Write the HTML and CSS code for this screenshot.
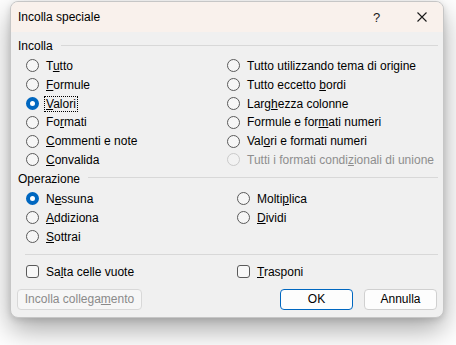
FILE: index.html
```html
<!DOCTYPE html>
<html lang="it">
<head>
<meta charset="utf-8">
<title>Incolla speciale</title>
<link rel="stylesheet" href="styles.css">
</head>
<body>
<div class="dialog">
  <div class="titlebar">
    <div class="title">Incolla speciale</div>
    <div class="tb-btn help">?</div>
    <div class="tb-btn close">
      <svg width="10" height="10" viewBox="0 0 10 10"><path d="M0.5 0.5L9.5 9.5M9.5 0.5L0.5 9.5" stroke="#1a1a1a" stroke-width="1.1" fill="none"/></svg>
    </div>
  </div>
  <div class="content">
    <div class="group-head"><span>Incolla</span><div class="rule"></div></div>
    <div class="radios paste">
      <div class="opt"><span class="radio"></span><span class="lbl">T<u>u</u>tto</span></div>
      <div class="opt"><span class="radio"></span><span class="lbl"><u>F</u>ormule</span></div>
      <div class="opt"><span class="radio on"></span><span class="lbl focus"><u>V</u>alori</span></div>
      <div class="opt"><span class="radio"></span><span class="lbl">Fo<u>r</u>mati</span></div>
      <div class="opt"><span class="radio"></span><span class="lbl"><u>C</u>ommenti e note</span></div>
      <div class="opt"><span class="radio"></span><span class="lbl"><u>C</u>onvalida</span></div>
      <div class="opt"><span class="radio"></span><span class="lbl">Tutto utilizzando tema di ori<u>g</u>ine</span></div>
      <div class="opt"><span class="radio"></span><span class="lbl">Tutto eccetto <u>b</u>ordi</span></div>
      <div class="opt"><span class="radio"></span><span class="lbl">Larg<u>h</u>ezza colonne</span></div>
      <div class="opt"><span class="radio"></span><span class="lbl">Formule e for<u>m</u>ati numeri</span></div>
      <div class="opt"><span class="radio"></span><span class="lbl">Val<u>o</u>ri e formati numeri</span></div>
      <div class="opt disabled"><span class="radio"></span><span class="lbl">Tutti i formati condi<u>z</u>ionali di unione</span></div>
    </div>
    <div class="group-head op-head"><span>Operazione</span><div class="rule"></div></div>
    <div class="radios ops">
      <div class="opt"><span class="radio on"></span><span class="lbl">N<u>e</u>ssuna</span></div>
      <div class="opt"><span class="radio"></span><span class="lbl"><u>A</u>ddiziona</span></div>
      <div class="opt"><span class="radio"></span><span class="lbl"><u>S</u>ottrai</span></div>
      <div class="opt"><span class="radio"></span><span class="lbl">Molti<u>p</u>lica</span></div>
      <div class="opt"><span class="radio"></span><span class="lbl"><u>D</u>ividi</span></div>
    </div>
    <div class="separator"></div>
    <div class="checks">
      <div class="opt"><span class="check"></span><span class="lbl">Sa<u>l</u>ta celle vuote</span></div>
      <div class="opt"><span class="check"></span><span class="lbl"><u>T</u>rasponi</span></div>
    </div>
    <div class="buttons">
      <button class="btn link" disabled>Incolla collega<u>m</u>ento</button>
      <div class="spacer"></div>
      <button class="btn ok">OK</button>
      <button class="btn cancel">Annulla</button>
    </div>
  </div>
</div>
</body>
</html>
```
FILE: styles.css
```css
* { box-sizing: border-box; }
html, body { margin: 0; padding: 0; background: #ffffff; }
html { min-height: 100%; }
body {
  min-height: 345px;
  font-family: "Liberation Sans", Arial, sans-serif;
  font-size: 12px;
  color: #000;
  padding-top: 1px;
}
.dialog {
  margin: 0 0 0 10px;
  width: 434px;
  height: 317px;
  border: 1px solid #c6c6c6;
  border-radius: 8px;
  background: #f0f0f0;
  box-shadow: 0 12px 28px rgba(0,0,0,0.34), 0 2px 6px rgba(0,0,0,0.12);
  overflow: hidden;
  display: flex;
  flex-direction: column;
}
.titlebar {
  display: flex;
  align-items: center;
  height: 30px;
  flex: none;
  padding-left: 7px;
  background: #f9f1ec;
}
.title { flex: 1; }
.tb-btn {
  display: flex;
  align-items: center;
  justify-content: center;
  height: 100%;
}
.help { width: 47px; font-size: 13px; color: #1a1a1a; }
.close { width: 43px; }
.content { padding: 6px 5px 0 7px; }
.group-head {
  display: flex;
  align-items: center;
  height: 16px;
  line-height: 16px;
}
.group-head .rule {
  flex: 1;
  height: 1px;
  background: #d8d8d8;
  margin-left: 8px;
  margin-bottom: 2px;
}
.op-head { margin-top: 1.6px; }
.radios {
  display: grid;
  grid-auto-flow: column;
  margin-left: 8px;
}
.paste {
  grid-template-columns: 201px 1fr;
  grid-template-rows: repeat(6, 18.8px);
  margin-top: 2.6px;
}
.ops {
  grid-template-columns: 211px 1fr;
  grid-template-rows: repeat(3, 19px);
  margin-top: 2.5px;
}
.opt {
  display: flex;
  align-items: center;
  white-space: nowrap;
}
.radio {
  flex: none;
  width: 13px;
  height: 13px;
  border: 1px solid #5a5a5a;
  border-radius: 50%;
  background: #f6f6f6;
  margin-right: 5px;
}
.radio.on {
  border: 4px solid #0067c0;
  background: #ffffff;
}
.lbl {
  border: 1px solid transparent;
  padding: 0 1px;
  line-height: 14px;
}
.lbl.focus { border: 1px dotted #000; }
.disabled .lbl { color: #8e8e8e; }
.disabled .radio { border-color: #cacaca; background: #f2f2f2; }
.separator {
  height: 1px;
  background: #d8d8d8;
  margin: 7.5px 0 0 7px;
}
.checks {
  display: grid;
  grid-template-columns: 211px 1fr;
  height: 18px;
  margin: 8px 0 0 8px;
}
.check {
  flex: none;
  width: 13px;
  height: 13px;
  border: 1px solid #5a5a5a;
  border-radius: 3px;
  background: #f8f8f8;
  margin-right: 5px;
}
.buttons {
  display: flex;
  height: 21px;
  margin: 8px 1px 0 -1px;
}
.spacer { flex: 1; }
.btn {
  font-family: "Liberation Sans", Arial, sans-serif;
  font-size: 12px;
  color: #000;
  height: 21px;
  padding: 0;
  border: 1px solid #d0d0d0;
  border-radius: 4px;
  background: #fdfdfd;
}
.btn u { text-decoration: underline; }
.link { width: 125px; color: #8a8a8a; background: #f6f6f6; border-color: #d8d8d8; }
.ok { width: 73px; border-color: #0067c0; }
.cancel { width: 73px; margin-left: 11px; }
```
